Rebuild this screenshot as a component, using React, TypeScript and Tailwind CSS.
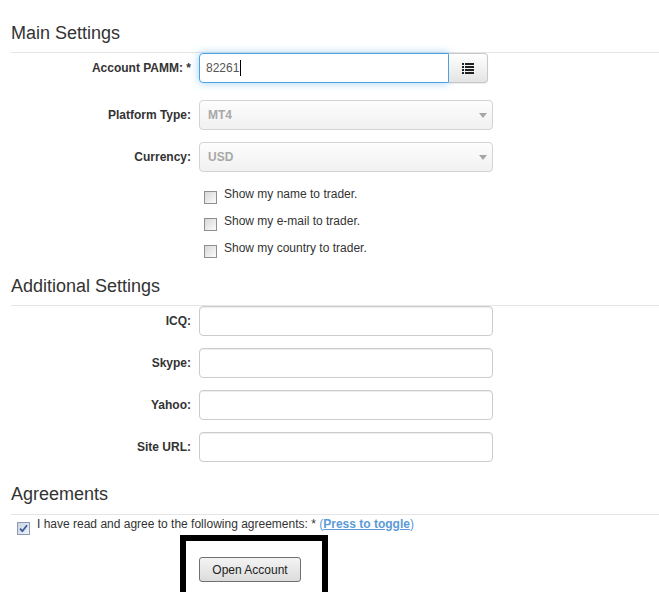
import React from "react";

function Heading({ children, className = "" }: { children: React.ReactNode; className?: string }) {
  return (
    <div className={`border-b border-[#e5e5e5] text-[18px] leading-[20px] text-[#333] ${className}`}>
      {children}
    </div>
  );
}

function Label({ children }: { children: React.ReactNode }) {
  return <div className="w-[180px] shrink-0 text-right text-[12px] font-bold text-[#333]">{children}</div>;
}

function Box({ checked }: { checked?: boolean }) {
  return (
    <span
      className={`flex h-[13px] w-[13px] shrink-0 items-center justify-center border ${
        checked
          ? "border-[#8e9bb3] bg-linear-to-br from-[#c9d3e3] to-[#f0f3f8]"
          : "border-[#8e8f8f] bg-linear-to-br from-[#d8d8d8] to-[#fbfbfb]"
      }`}
    >
      {checked && (
        <svg width="9" height="9" viewBox="0 0 9 9">
          <path d="M1 4.6 L3.4 7.2 L8 1.2" fill="none" stroke="#3b5a9a" strokeWidth="1.8" />
        </svg>
      )}
    </span>
  );
}

function TextRow({ label, className = "" }: { label: string; className?: string }) {
  return (
    <div className={`flex h-[30px] items-center ${className}`}>
      <Label>{label}</Label>
      <div className="ml-[8px] h-[30px] w-[294px] rounded-[4px] border border-[#cccccc] bg-white shadow-[inset_0_1px_1px_rgba(0,0,0,0.075)]" />
    </div>
  );
}

function SelectRow({ label, value, className = "" }: { label: string; value: string; className?: string }) {
  return (
    <div className={`flex h-[30px] items-center ${className}`}>
      <Label>{label}</Label>
      <div className="ml-[8px] flex h-[30px] w-[294px] items-center justify-between rounded-[4px] border border-[#d4d4d4] bg-linear-to-b from-[#fdfdfd] to-[#f1f1f1] pl-[8px] pr-[5px]">
        <span className="text-[12px] font-bold text-[#a8a8a8]">{value}</span>
        <svg width="8" height="5" viewBox="0 0 8 5">
          <path d="M0 0 H8 L4 5 Z" fill="#a6a6a6" />
        </svg>
      </div>
    </div>
  );
}

function CheckRow({ text }: { text: string }) {
  return (
    <div className="flex h-[27px] items-start pl-[193px]">
      <span className="mt-[6px]">
        <Box />
      </span>
      <span className="ml-[7px] text-[12px] leading-[18px] text-[#333]">{text}</span>
    </div>
  );
}

export default function App() {
  return (
    <div className="min-h-[592px] overflow-hidden bg-white pl-[11px] pt-[23px] font-['Liberation_Sans',Arial,sans-serif] text-[12px] text-[#333]">
      <Heading className="pb-[9px]">Main Settings</Heading>

      <div className="flex h-[30px] items-center">
        <Label>Account PAMM: *</Label>
        <div className="ml-[8px] flex h-[30px]">
          <div className="flex h-[30px] w-[250px] items-center rounded-l-[4px] border border-[#4aa3e8] bg-white pl-[6px] shadow-[0_0_8px_rgba(102,175,233,0.6)]">
            <span className="text-[12px] text-[#555]">82261</span>
            <span className="ml-[1px] h-[16px] w-[1px] bg-black" />
          </div>
          <div className="flex h-[30px] w-[39px] items-center justify-center rounded-r-[4px] border border-l-0 border-[#c8c8c8] bg-linear-to-b from-[#ffffff] to-[#e4e4e4] shadow-[0_1px_1px_rgba(0,0,0,0.08)]">
            <svg width="12" height="11" viewBox="0 0 12 11">
              <rect x="0" y="0" width="2" height="2" fill="#222" />
              <rect x="3" y="0" width="9" height="2" fill="#222" />
              <rect x="0" y="3" width="2" height="2" fill="#222" />
              <rect x="3" y="3" width="9" height="2" fill="#222" />
              <rect x="0" y="6" width="2" height="2" fill="#222" />
              <rect x="3" y="6" width="9" height="2" fill="#222" />
              <rect x="0" y="9" width="2" height="2" fill="#222" />
              <rect x="3" y="9" width="9" height="2" fill="#222" />
            </svg>
          </div>
        </div>
      </div>

      <SelectRow label="Platform Type:" value="MT4" className="mt-[17px]" />
      <SelectRow label="Currency:" value="USD" className="mt-[12px]" />

      <div className="mt-[13px]">
        <CheckRow text="Show my name to trader." />
        <CheckRow text="Show my e-mail to trader." />
        <CheckRow text="Show my country to trader." />
      </div>

      <Heading className="mt-[10px] pb-[9px]">Additional Settings</Heading>

      <TextRow label="ICQ:" />
      <TextRow label="Skype:" className="mt-[12px]" />
      <TextRow label="Yahoo:" className="mt-[12px]" />
      <TextRow label="Site URL:" className="mt-[12px]" />

      <Heading className="mt-[22px] pb-[10px]">Agreements</Heading>

      <div className="flex h-[20px] items-start pl-[6px]">
        <span className="mt-[7px]">
          <Box checked />
        </span>
        <span className="ml-[7px] mt-[1px] text-[12px] leading-[16px] text-[#333]">
          I have read and agree to the following agreements: *{" "}
          <span className="text-[#5b9bd8]">
            (<span className="font-bold underline">Press to toggle</span>)
          </span>
        </span>
      </div>

      <div className="ml-[169px] h-[70px] w-[148px] border-[6px] border-black pl-[13px] pt-[16px]">
        <div className="flex h-[25px] w-[102px] items-center justify-center rounded-[3px] border border-[#707070] bg-linear-to-b from-[#f4f4f4] to-[#dcdcdc] text-[12px] text-[#222]">
          Open Account
        </div>
      </div>
    </div>
  );
}
